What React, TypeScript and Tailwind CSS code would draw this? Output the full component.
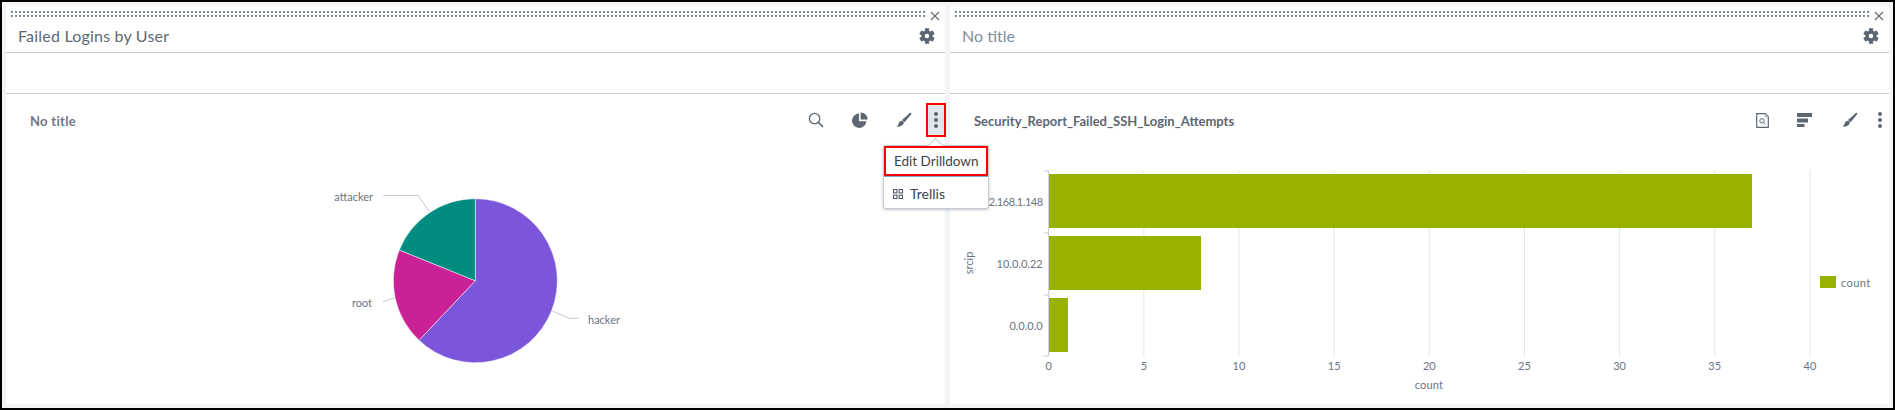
import React from "react";

const iconColor = "#5c6773";

function Gear() {
  const teeth = [0, 60, 120, 180, 240, 300];
  return (
    <svg viewBox="0 0 16 16" className="w-4 h-4" fill={iconColor}>
      {teeth.map((a) => (
        <rect key={a} x="5.9" y="0.3" width="4.2" height="4" rx="0.5" transform={`rotate(${a} 8 8)`} />
      ))}
      <path fillRule="evenodd" d="M8 2.4a5.6 5.6 0 1 0 0 11.2 5.6 5.6 0 0 0 0-11.2zM8 5.7a2.3 2.3 0 1 1 0 4.6 2.3 2.3 0 0 1 0-4.6z" />
    </svg>
  );
}

function Close() {
  return (
    <svg viewBox="0 0 10 10" className="w-[10px] h-[10px] shrink-0 ml-[5px]" fill="none" stroke={iconColor} strokeWidth="1.1">
      <path d="M1 1l8 8M9 1l-8 8" />
    </svg>
  );
}

function Search() {
  return (
    <svg viewBox="0 0 16 16" className="w-4 h-4" fill="none" stroke={iconColor} strokeWidth="1.3">
      <circle cx="6.6" cy="6.6" r="5.2" />
      <path d="M10.4 10.4l4.6 4.4" strokeWidth="1.6" />
    </svg>
  );
}

function Pie() {
  return (
    <svg viewBox="0 0 16 16" className="w-4 h-4" fill={iconColor}>
      <path d="M7 1.6v7.6h7.4A7.2 7.2 0 1 1 7 1.6z" />
      <path d="M8.6 0.4a7 7 0 0 1 7 7h-7z" />
    </svg>
  );
}

function Brush() {
  return (
    <svg viewBox="0 0 16 16" className="w-4 h-4" fill={iconColor}>
      <path d="M14.4 0.6l1.2 1.2-7 8.4-2.6-2.3z" />
      <path d="M5.6 8.7c1.4-0.2 2.5 0.9 2.2 2.3-0.6 2.4-3.8 4-7.2 3.8 1.5-1 1.6-2.8 2.5-4.3 0.6-1 1.4-1.7 2.5-1.8z" />
    </svg>
  );
}

function Dots() {
  return (
    <svg viewBox="0 0 6 18" className="w-[6px] h-[18px]" fill={iconColor}>
      <circle cx="3" cy="3" r="2" />
      <circle cx="3" cy="9" r="2" />
      <circle cx="3" cy="15" r="2" />
    </svg>
  );
}

function DocSearch() {
  return (
    <svg viewBox="0 0 13 15" className="w-[13px] h-[15px]" fill="none" stroke={iconColor}>
      <path d="M0.7 0.7h8.6l3 3v10.6H0.7z" strokeWidth="1.2" />
      <path d="M9 0.7v3.2h3.2" stroke="#a9b3bd" fill="#c3cbd4" strokeWidth="0.8" />
      <circle cx="6" cy="7.8" r="2.2" strokeWidth="1" />
      <path d="M7.6 9.5l1.8 1.8" strokeWidth="1" />
    </svg>
  );
}

function Bars() {
  return (
    <svg viewBox="0 0 15 14" className="w-[15px] h-[14px]" fill={iconColor}>
      <rect x="0" y="0" width="15" height="4" />
      <rect x="0" y="5.5" width="11" height="4" />
      <rect x="0" y="11" width="7.5" height="3" />
    </svg>
  );
}

function GridIcon() {
  return (
    <svg viewBox="0 0 10 10" className="w-[10px] h-[10px]" fill="none" stroke="#4a535c" strokeWidth="1">
      <rect x="0.5" y="0.5" width="3.4" height="3.4" />
      <rect x="6.1" y="0.5" width="3.4" height="3.4" />
      <rect x="0.5" y="6.1" width="3.4" height="3.4" />
      <rect x="6.1" y="6.1" width="3.4" height="3.4" />
    </svg>
  );
}

function PanelHead({ children, dim }: { children: React.ReactNode; dim?: boolean }) {
  return (
    <>
      <div className="h-[46px] flex flex-col">
        <div className="h-[15px] flex items-start pt-[5px] pl-[3px] pr-[5px]">
          <div className="flex-1 h-2 bg-[conic-gradient(#7e8c99_25%,transparent_0)] bg-[length:4px_4px]" />
          <Close />
        </div>
        <div className="h-[30px] flex items-center justify-between pl-3 pr-[10px]">
          <div className={dim ? "text-[16px] text-[#818d99]" : "text-[16px] tracking-[0.2px] text-[#5c6773]"}>
            {children}
          </div>
          <Gear />
        </div>
      </div>
      <div className="h-[42px] border-y border-[#c3cbd4]" />
    </>
  );
}

function PieChart() {
  const cx = 469.3;
  const cy = 132.7;
  const r = 82;
  return (
    <svg className="block w-[939px] h-[257px]" viewBox="0 0 939 257">
      <path d={`M${cx} ${cy}V${cy - r}A${r} ${r} 0 1 1 ${cx - 56.3} ${cy + 59.6}Z`} fill="#7b56db" stroke="#fff" strokeWidth="0.5" />
      <path d={`M${cx} ${cy}L${cx - 56.3} ${cy + 59.6}A${r} ${r} 0 0 1 ${cx - 76} ${cy - 30.7}Z`} fill="#cb2196" stroke="#fff" strokeWidth="0.5" />
      <path d={`M${cx} ${cy}L${cx - 76} ${cy - 30.7}A${r} ${r} 0 0 1 ${cx} ${cy - r}Z`} fill="#008c80" stroke="#fff" strokeWidth="0.5" />
      <g fill="none" stroke="#c3cbd4">
        <path d="M377.3 47.5H412.3L423.3 63.7" />
        <path d="M377 153.7L389 149.7" />
        <path d="M546.3 163L563.3 170.3H572.3" />
      </g>
      <g fill="#6b7480" fontSize="11">
        <text x="367" y="53" textAnchor="end">attacker</text>
        <text x="366" y="159" textAnchor="end">root</text>
        <text x="582" y="175.5">hacker</text>
      </g>
    </svg>
  );
}

function BarChart() {
  const x0 = 98.7;
  const unit = 19.03;
  const yTicks = [23, 85, 147, 208];
  const xTicks = [0, 5, 10, 15, 20, 25, 30, 35, 40];
  const bars = [
    { y: 26, v: 37, label: "192.168.1.148", ls: -0.45 },
    { y: 88, v: 8, label: "10.0.0.22", ls: 0 },
    { y: 150, v: 1, label: "0.0.0.0", ls: 0 },
  ];
  return (
    <svg className="block w-[939px] h-[257px]" viewBox="0 0 939 257">
      {xTicks.slice(1).map((t) => (
        <line key={t} x1={x0 + t * unit} x2={x0 + t * unit} y1="23" y2="208" stroke="#e1e6eb" />
      ))}
      <line x1={x0} x2={x0} y1="23" y2="208" stroke="#c3cbd4" />
      {yTicks.map((y) => (
        <line key={y} x1={x0 - 5} x2={x0} y1={y} y2={y} stroke="#c3cbd4" />
      ))}
      {bars.map((b) => (
        <rect key={b.y} x={x0 + 0.3} y={b.y} width={b.v * 19} height="54" fill="#99b100" />
      ))}
      <g fill="#6b7480" fontSize="11">
        {bars.map((b) => (
          <text key={b.y} x="92.7" y={b.y + 32} textAnchor="end" letterSpacing={b.ls}>{b.label}</text>
        ))}
        {xTicks.map((t) => (
          <text key={t} x={x0 + t * unit} y="222" textAnchor="middle">{t}</text>
        ))}
        <text x="479" y="241" textAnchor="middle" letterSpacing="0.2">count</text>
        <text transform="translate(23 115) rotate(-90)" textAnchor="middle">srcip</text>
        <text x="891" y="139" letterSpacing="0.4">count</text>
      </g>
      <rect x="870" y="128" width="16" height="12" fill="#99b100" />
    </svg>
  );
}

export default function App() {
  return (
    <div className="w-[1895px] h-[410px] border-2 border-black bg-[#f2f4f5] p-1 flex gap-[5px] font-[family-name:Lato] overflow-hidden">
      <div className="flex-1 bg-white relative">
        <PanelHead>Failed Logins by User</PanelHead>
        <div className="h-[54px] pt-[9px] pb-[11px] flex items-center pl-6 -mr-px">
          <div className="flex-1 mt-1 text-[13px] tracking-[0.3px] font-bold text-[#6b7785]">No title</div>
          <div className="w-11 flex justify-center"><Search /></div>
          <div className="w-11 flex justify-center"><Pie /></div>
          <div className="w-11 flex justify-center"><Brush /></div>
          <div className="w-5 h-[34px] border-2 border-[#ff0000] bg-[#e1e6eb] flex items-center justify-center">
            <Dots />
          </div>
        </div>
        <PieChart />
        <div className="absolute left-[877px] top-[139px] w-[106px] h-[64px] bg-white border border-[#c3cbd4] rounded-[3px] shadow-[0_1px_3px_rgba(60,68,77,0.3)] z-20">
          <div className="absolute left-[46px] -top-[6px] w-[11px] h-[11px] rotate-45 bg-white border-l border-t border-[#c3cbd4]" />
          <div className="relative h-[30px] border-2 border-[#ff0000] shadow-[0_1px_0_#7fa8d6] flex items-center pl-2 text-[13.5px] text-[#3c444d]">
            Edit Drilldown
          </div>
          <div className="h-[33px] mt-px flex items-center pl-[9px] gap-[7px] text-[14px] text-[#3c444d]">
            <GridIcon />
            Trellis
          </div>
        </div>
      </div>
      <div className="flex-1 bg-white relative">
        <PanelHead dim>No title</PanelHead>
        <div className="h-[54px] pt-[9px] pb-[11px] flex items-center pl-6 pr-[6px]">
          <div className="flex-1 mt-1 text-[13px] font-bold text-[#5c6773]">Security_Report_Failed_SSH_Login_Attempts</div>
          <DocSearch />
          <div className="ml-[28px]"><Bars /></div>
          <div className="ml-[30px]"><Brush /></div>
          <div className="ml-[19px]"><Dots /></div>
        </div>
        <BarChart />
      </div>
    </div>
  );
}
